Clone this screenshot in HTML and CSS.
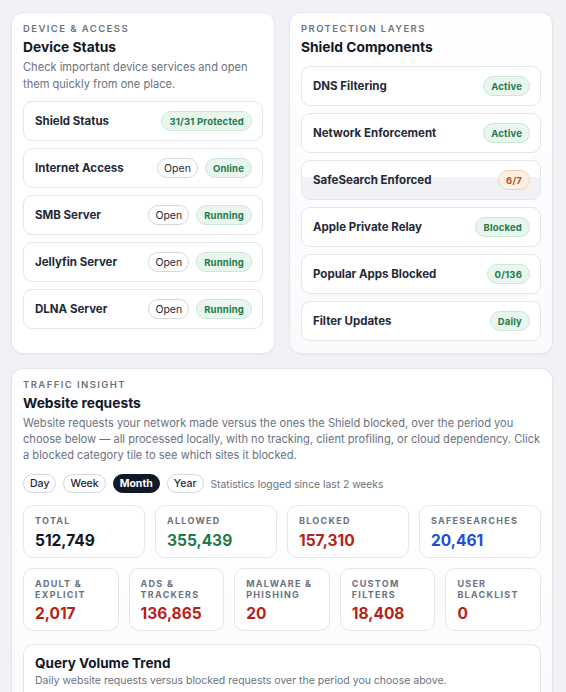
FILE: index.html
```html
<!DOCTYPE html>
<html lang="en">
<head>
    <meta charset="UTF-8">
    <meta name="viewport" content="width=device-width, initial-scale=1.0">
    <title>Shield Dashboard</title>
    <link rel="stylesheet" href="styles.css">
</head>
<body>
    <div class="page">
        <div class="top-grid">
            <!-- Device services -->
            <section class="card">
                <div class="eyebrow">Device &amp; Access</div>
                <h2 class="card-title">Device Status</h2>
                <p class="card-desc">Check important device services and open them quickly from one place.</p>
                <div class="rows">
                    <div class="row">
                        <span class="row-label">Shield Status</span>
                        <div class="row-actions"><span class="badge">31/31 Protected</span></div>
                    </div>
                    <div class="row">
                        <span class="row-label">Internet Access</span>
                        <div class="row-actions"><button class="open-btn">Open</button><span class="badge">Online</span></div>
                    </div>
                    <div class="row">
                        <span class="row-label">SMB Server</span>
                        <div class="row-actions"><button class="open-btn">Open</button><span class="badge">Running</span></div>
                    </div>
                    <div class="row">
                        <span class="row-label">Jellyfin Server</span>
                        <div class="row-actions"><button class="open-btn">Open</button><span class="badge">Running</span></div>
                    </div>
                    <div class="row">
                        <span class="row-label">DLNA Server</span>
                        <div class="row-actions"><button class="open-btn">Open</button><span class="badge">Running</span></div>
                    </div>
                </div>
            </section>

            <!-- Shield layers -->
            <section class="card card-soft">
                <div class="eyebrow">Protection Layers</div>
                <h2 class="card-title title-tight">Shield Components</h2>
                <div class="rows">
                    <div class="row">
                        <span class="row-label">DNS Filtering</span>
                        <span class="badge">Active</span>
                    </div>
                    <div class="row">
                        <span class="row-label">Network Enforcement</span>
                        <span class="badge">Active</span>
                    </div>
                    <div class="row row-partial">
                        <span class="row-label">SafeSearch Enforced</span>
                        <span class="badge badge-warn">6/7</span>
                    </div>
                    <div class="row">
                        <span class="row-label">Apple Private Relay</span>
                        <span class="badge">Blocked</span>
                    </div>
                    <div class="row">
                        <span class="row-label">Popular Apps Blocked</span>
                        <span class="badge">0/136</span>
                    </div>
                    <div class="row">
                        <span class="row-label">Filter Updates</span>
                        <span class="badge">Daily</span>
                    </div>
                </div>
            </section>
        </div>

        <!-- Traffic stats -->
        <section class="card card-wide">
            <div class="eyebrow">Traffic Insight</div>
            <h2 class="card-title">Website requests</h2>
            <p class="card-desc desc-wide">Website requests your network made versus the ones the Shield blocked, over the period you choose below — all processed locally, with no tracking, client profiling, or cloud dependency. Click a blocked category tile to see which sites it blocked.</p>

            <div class="periods">
                <button class="period">Day</button>
                <button class="period">Week</button>
                <button class="period active">Month</button>
                <button class="period">Year</button>
                <span class="period-note">Statistics logged since last 2 weeks</span>
            </div>

            <div class="tiles tiles-4">
                <div class="tile"><div class="tile-label">Total</div><div class="tile-value">512,749</div></div>
                <div class="tile"><div class="tile-label">Allowed</div><div class="tile-value green">355,439</div></div>
                <div class="tile"><div class="tile-label">Blocked</div><div class="tile-value red">157,310</div></div>
                <div class="tile"><div class="tile-label">SafeSearches</div><div class="tile-value blue">20,461</div></div>
            </div>

            <div class="tiles tiles-5">
                <div class="tile"><div class="tile-label">Adult &amp;<br>Explicit</div><div class="tile-value red">2,017</div></div>
                <div class="tile"><div class="tile-label">Ads &amp;<br>Trackers</div><div class="tile-value red">136,865</div></div>
                <div class="tile"><div class="tile-label">Malware &amp;<br>Phishing</div><div class="tile-value red">20</div></div>
                <div class="tile"><div class="tile-label">Custom<br>Filters</div><div class="tile-value red">18,408</div></div>
                <div class="tile"><div class="tile-label">User<br>Blacklist</div><div class="tile-value red">0</div></div>
            </div>

            <div class="trend">
                <h3 class="trend-title">Query Volume Trend</h3>
                <p class="trend-desc">Daily website requests versus blocked requests over the period you choose above.</p>
            </div>
        </section>
    </div>
</body>
</html>
```

FILE: styles.css
```css
* {
    box-sizing: border-box;
}
body {
    margin: 0;
    background-color: #f1f2f5;
    font-family: Inter, "Noto Sans", sans-serif;
    color: #111827;
}
.page {
    padding: 12px 13px 12px 11px;
}
.top-grid {
    display: grid;
    grid-template-columns: 1fr 1fr;
    gap: 14px;
    margin-bottom: 14px;
}
.card {
    background-color: #fff;
    border: 1px solid #e4e6ea;
    border-radius: 12px;
    padding: 9px 11px 12px;
    box-shadow: 0 1px 2px rgba(15, 23, 42, 0.04);
}
.card-soft {
    background: linear-gradient(#fff, #f9fafc);
}
.card-wide {
    background: linear-gradient(#fff 40%, #f9fafc);
    padding-bottom: 0;
    border-bottom: none;
    border-bottom-left-radius: 0;
    border-bottom-right-radius: 0;
}
.eyebrow {
    font-size: 9.5px;
    line-height: 14px;
    font-weight: 600;
    letter-spacing: 0.15em;
    text-transform: uppercase;
    color: #6b7280;
}
.card-title {
    margin: 1px 0 2px;
    font-size: 13.8px;
    line-height: 20px;
    font-weight: 700;
    color: #111827;
}
.title-tight {
    margin-bottom: 9px;
}
.card-desc {
    margin: 0 0 8px;
    font-size: 11.1px;
    line-height: 17px;
    color: #6b7280;
}
.desc-wide {
    line-height: 16px;
    margin-bottom: 11px;
}
.rows {
    display: flex;
    flex-direction: column;
    gap: 7px;
}
.row {
    display: flex;
    align-items: center;
    justify-content: space-between;
    height: 40px;
    padding: 0 10px 0 11px;
    border: 1px solid #e4e6ea;
    border-radius: 9px;
    background-color: #fff;
}
.row-partial {
    background: linear-gradient(#fff 42%, #f1f2f6 42%);
}
.row-label {
    font-size: 11.5px;
    font-weight: 700;
    color: #1f2937;
}
.row-actions {
    display: flex;
    align-items: center;
    gap: 7px;
}
.badge {
    display: inline-flex;
    align-items: center;
    height: 20px;
    padding: 0 7px;
    border-radius: 999px;
    background-color: #e9f6ee;
    border: 1px solid #cbe8d6;
    color: #1e7a4a;
    font-size: 9.5px;
    font-weight: 700;
    letter-spacing: 0.02em;
}
.badge-warn {
    background-color: #fdf1e6;
    border-color: #f3cfae;
    color: #b4531a;
}
.open-btn {
    height: 20px;
    padding: 0 6px;
    border-radius: 999px;
    border: 1px solid #d4d7dd;
    background-color: #fff;
    font-family: inherit;
    font-size: 10.5px;
    color: #1f2937;
    cursor: pointer;
}
.periods {
    display: flex;
    align-items: center;
    gap: 7px;
    margin-bottom: 12px;
}
.period {
    height: 19px;
    padding: 0 6px;
    border-radius: 999px;
    border: 1px solid #d4d7dd;
    background-color: #fff;
    font-family: inherit;
    font-size: 10.5px;
    font-weight: 500;
    color: #1f2937;
    cursor: pointer;
}
.period.active {
    background-color: #111827;
    border-color: #111827;
    color: #fff;
    font-weight: 700;
}
.period-note {
    font-size: 10.3px;
    color: #6b7280;
}
.tiles {
    display: grid;
    gap: 10px;
    margin-bottom: 10px;
}
.tiles-4 {
    grid-template-columns: repeat(4, 1fr);
}
.tiles-5 {
    grid-template-columns: repeat(5, 1fr);
    margin-bottom: 13px;
}
.tile {
    background-color: #fff;
    border: 1px solid #e4e6ea;
    border-radius: 10px;
    padding: 9px 11px 6px;
    cursor: pointer;
}
.tile-label {
    font-size: 9px;
    line-height: 11px;
    font-weight: 700;
    letter-spacing: 0.14em;
    text-transform: uppercase;
    color: #6b7280;
}
.tile-value {
    margin-top: 4.5px;
    font-size: 15.5px;
    line-height: 20px;
    font-weight: 700;
    color: #111827;
}
.tile-value.green {
    color: #1e7a4a;
}
.tile-value.red {
    color: #b42318;
}
.tile-value.blue {
    color: #1d4ed8;
}
.trend {
    background-color: #fff;
    border: 1px solid #e4e6ea;
    border-bottom: none;
    border-radius: 10px 10px 0 0;
    padding: 8px 11px 20px;
}
.trend-title {
    margin: 0;
    font-size: 13.5px;
    line-height: 20px;
    font-weight: 700;
    color: #111827;
}
.trend-desc {
    margin: 0;
    font-size: 10.5px;
    line-height: 16px;
    color: #6b7280;
}
```
